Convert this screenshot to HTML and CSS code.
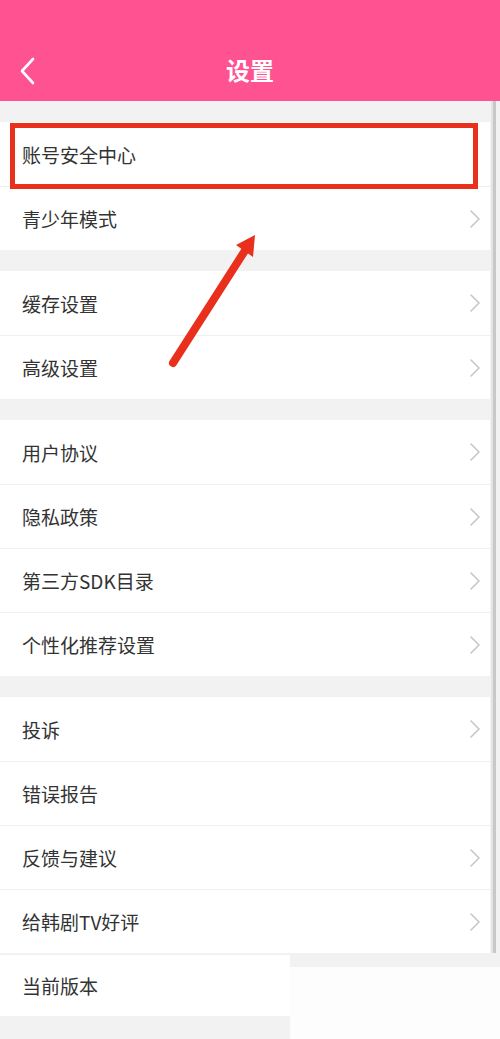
FILE: index.html
```html
<!DOCTYPE html>
<html lang="zh-CN">
<head>
<meta charset="utf-8">
<title>设置</title>
<link rel="stylesheet" href="styles.css">
</head>
<body>
<div class="page">
  <header class="header">
    <div class="bar">
      <span class="back">
        <svg width="18" height="28" viewBox="0 0 18 28"><path d="M15 2 L4 14 L15 26" fill="none" stroke="#fff" stroke-width="2.6" stroke-linecap="round" stroke-linejoin="round"/></svg>
      </span>
      <h1 class="title">设置</h1>
    </div>
  </header>

  <section class="group">
    <div class="row highlighted"><span class="label">账号安全中心</span><span class="mark"></span></div>
    <div class="row"><span class="label">青少年模式</span><svg class="chev" width="12" height="20" viewBox="0 0 12 20"><path d="M2 2 L10 10 L2 18"/></svg></div>
  </section>

  <section class="group">
    <div class="row"><span class="label">缓存设置</span><svg class="chev" width="12" height="20" viewBox="0 0 12 20"><path d="M2 2 L10 10 L2 18"/></svg></div>
    <div class="row"><span class="label">高级设置</span><svg class="chev" width="12" height="20" viewBox="0 0 12 20"><path d="M2 2 L10 10 L2 18"/></svg></div>
  </section>

  <section class="group">
    <div class="row"><span class="label">用户协议</span><svg class="chev" width="12" height="20" viewBox="0 0 12 20"><path d="M2 2 L10 10 L2 18"/></svg></div>
    <div class="row"><span class="label">隐私政策</span><svg class="chev" width="12" height="20" viewBox="0 0 12 20"><path d="M2 2 L10 10 L2 18"/></svg></div>
    <div class="row"><span class="label">第三方SDK目录</span><svg class="chev" width="12" height="20" viewBox="0 0 12 20"><path d="M2 2 L10 10 L2 18"/></svg></div>
    <div class="row"><span class="label">个性化推荐设置</span><svg class="chev" width="12" height="20" viewBox="0 0 12 20"><path d="M2 2 L10 10 L2 18"/></svg></div>
  </section>

  <section class="group">
    <div class="row"><span class="label">投诉</span><svg class="chev" width="12" height="20" viewBox="0 0 12 20"><path d="M2 2 L10 10 L2 18"/></svg></div>
    <div class="row"><span class="label">错误报告</span></div>
    <div class="row"><span class="label">反馈与建议</span><svg class="chev" width="12" height="20" viewBox="0 0 12 20"><path d="M2 2 L10 10 L2 18"/></svg></div>
    <div class="row"><span class="label">给韩剧TV好评</span><svg class="chev" width="12" height="20" viewBox="0 0 12 20"><path d="M2 2 L10 10 L2 18"/></svg></div>
  </section>

  <div class="tail">
    <div class="tail-left">
      <div class="row version"><span class="label">当前版本</span></div>
    </div>
    <div class="tail-right"></div>
  </div>

  <div class="scrollbar"></div>

  <svg class="arrow" width="500" height="1039" viewBox="0 0 500 1039">
    <line x1="173" y1="363" x2="246" y2="249" stroke="#e8301c" stroke-width="8" stroke-linecap="round"/>
    <polygon points="255,235 236,245 253,257" fill="#e8301c"/>
  </svg>
</div>
</body>
</html>
```

FILE: styles.css
```css
* { box-sizing: border-box; }
html, body { margin: 0; padding: 0; }
body {
  background: #f2f2f2;
  font-family: "Noto Sans CJK SC", "Noto Sans", sans-serif;
  color: #333;
}
.page {
  position: relative;
  width: 500px;
  height: 1039px;
  overflow: hidden;
  background: #f2f2f2;
}
.header {
  background: #fe5390;
  height: 101px;
  padding-top: 40px;
}
.bar {
  position: relative;
  height: 62px;
  display: flex;
  align-items: center;
  justify-content: center;
}
.back {
  position: absolute;
  left: 18px;
  top: 17px;
  display: flex;
}
.title {
  margin: 0;
  color: #fff;
  font-size: 24px;
  font-weight: 700;
  line-height: 1;
  margin-top: -2px;
}
.group {
  background: #fff;
  margin-top: 21px;
  margin-right: 10px;
}
.row {
  position: relative;
  height: 64px;
  display: flex;
  align-items: center;
  justify-content: space-between;
  padding: 0 9px 0 22px;
  border-top: 1px solid #efefef;
  background: #fff;
}
.group .row:first-child { border-top: none; }
.label {
  font-size: 19px;
  line-height: 1;
  color: #333;
}
.chev {
  fill: none;
  stroke: #c6c6c6;
  stroke-width: 1.6;
  stroke-linecap: round;
  stroke-linejoin: round;
}
.highlighted .mark {
  position: absolute;
  left: 10px;
  top: 1px;
  width: 468px;
  height: 66px;
  border: 5px solid #e8301c;
  z-index: 2;
}
.tail {
  display: grid;
  grid-template-columns: 290px 210px;
  height: 90px;
}
.tail-left { padding-top: 2px; }
.tail-left .version {
  height: 61px;
  border-top: none;
}
.tail-right {
  margin-top: 14px;
  background: #fdfdfd;
}
.scrollbar {
  position: absolute;
  left: 491px;
  top: 101px;
  width: 5px;
  height: 852px;
  background: #c8c8c8;
  border-left: 2px solid #e4e4e4;
}
.arrow {
  position: absolute;
  left: 0;
  top: 0;
  pointer-events: none;
}
```
